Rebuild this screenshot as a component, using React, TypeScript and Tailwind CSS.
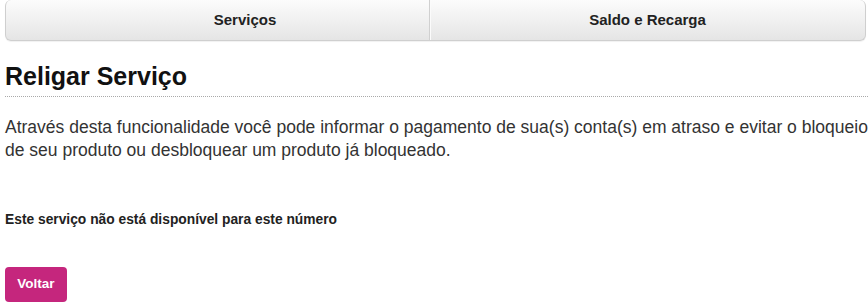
export default function App() {
  return (
    <div className="min-h-screen bg-white font-['Liberation_Sans',Arial,sans-serif] text-[#333]">
      <div className="pl-[5px] pr-[2px]">
        <div className="flex h-[41px] rounded-[6px] border border-t-0 border-[#cfcfcf] bg-gradient-to-b from-[#fcfcfc] to-[#e5e5e5] shadow-[0_1px_1px_rgba(0,0,0,0.06)]">
          <div className="flex w-[423px] shrink-0 items-center justify-center pl-[55px] text-[15px] font-bold text-[#222]">
            Serviços
          </div>
          <div className="flex flex-1 items-center justify-center border-l border-[#d0d0d0] text-[15px] font-bold text-[#222] shadow-[inset_1px_0_0_#fbfbfb]">
            Saldo e Recarga
          </div>
        </div>
      </div>

      <div className="pl-[5px]">
        <h1 className="mt-[21px] border-b border-dotted border-[#a9a9a9] pb-[6px] text-[25px] font-bold leading-[28px] text-[#111]">
          Religar Serviço
        </h1>

        <p className="mt-[19px] text-[17.5px] leading-[23px] text-[#333]">
          Através desta funcionalidade você pode informar o pagamento de sua(s) conta(s) em atraso e evitar o bloqueio de seu produto ou desbloquear um produto já bloqueado.
        </p>

        <p className="mt-[50px] text-[13.8px] font-bold leading-[16px] text-[#222]">
          Este serviço não está disponível para este número
        </p>

        <button className="mt-[39px] h-[35px] w-[62px] rounded-[4px] bg-[#c5267d] text-[13.5px] font-bold text-white">
          Voltar
        </button>
      </div>
    </div>
  );
}
